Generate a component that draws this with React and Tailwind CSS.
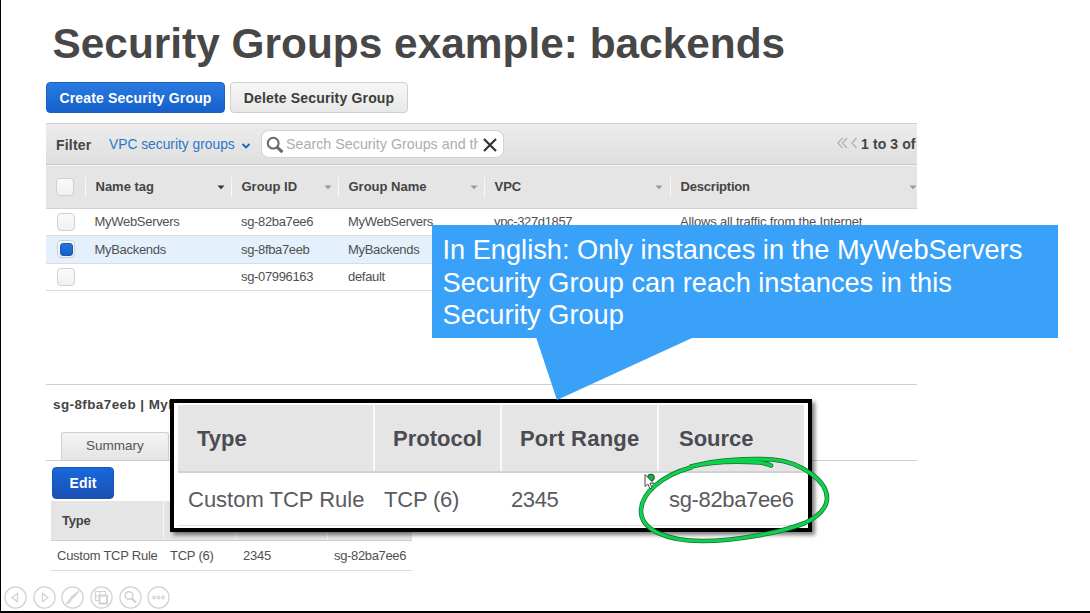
import React from "react";

const columns = [
  { label: "Name tag", width: "w-[146px]", arrow: "text-[#333]", gap: "pr-[6px]" },
  { label: "Group ID", width: "w-[107px]", arrow: "text-[#999]", gap: "pr-[6px]" },
  { label: "Group Name", width: "w-[146px]", arrow: "text-[#999]", gap: "pr-[6px]" },
  { label: "VPC", width: "w-[186px]", arrow: "text-[#999]", gap: "pr-[7px]", },
  { label: "Description", width: "w-[247px]", arrow: "text-[#999]", gap: "pr-0", tight: true },
];

const rows = [
  { name: "MyWebServers", id: "sg-82ba7ee6", group: "MyWebServers", vpc: "vpc-327d1857", desc: "Allows all traffic from the Internet" },
  { name: "MyBackends", id: "sg-8fba7eeb", group: "MyBackends", vpc: "", desc: "", selected: true },
  { name: "", id: "sg-07996163", group: "default", vpc: "", desc: "" },
];

function Checkbox({ checked }) {
  return (
    <span className="flex h-[18px] w-[18px] items-center justify-center rounded-[4px] border border-[#d0d0d0] bg-linear-to-b from-[#fbfbfb] to-[#f0f0f0]">
      {checked && <span className="h-[13px] w-[13px] rounded-[3px] border border-[#1a5cb5] bg-linear-to-b from-[#2277e0] to-[#1560cc]" />}
    </span>
  );
}

function SortArrow({ className }) {
  return (
    <svg className={className} width="8" height="5" viewBox="0 0 8 5">
      <path d="M0.5 0.5H7.5L4 4.3Z" fill="currentColor" />
    </svg>
  );
}

function Toolbar() {
  return (
    <div className="flex h-[42px] items-center border-t border-b border-t-[#cfcfcf] border-b-[#cacaca] bg-linear-to-b from-[#ececec] to-[#dfdfdf] pl-[10px] whitespace-nowrap">
      <span className="w-[53px] pt-[2px] text-[14px] font-bold tracking-[0.2px] text-[#444]">Filter</span>
      <span className="w-[132px] pt-[3px] text-[13.8px] text-[#2a78c8]">VPC security groups</span>
      <svg width="10" height="6" viewBox="0 0 10 6" className="mt-[3px]">
        <path d="M1.5 1L5 4.4L8.5 1" fill="none" stroke="#1a62c0" strokeWidth="1.8" />
      </svg>
      <div className="ml-[10px] flex h-[28px] w-[243px] items-center rounded-[8px] border border-[#d3d3d3] bg-white pl-[4px]">
        <svg width="18" height="18" viewBox="0 0 18 18" className="mt-px">
          <circle cx="7.2" cy="7.2" r="5.4" fill="none" stroke="#666" strokeWidth="2" />
          <path d="M11.3 11.3L16.4 16.2" stroke="#666" strokeWidth="3" />
        </svg>
        <span className="ml-[2px] w-[192px] overflow-hidden pt-[2px] text-[14.3px] text-[#adadad]">Search Security Groups and their</span>
        <svg width="14" height="14" viewBox="0 0 14 14" className="mt-px ml-[5px] shrink-0">
          <path d="M1 1L13 13M13 1L1 13" stroke="#333" strokeWidth="2.2" />
        </svg>
      </div>
      <svg width="21" height="12" viewBox="0 0 21 12" className="mb-[3px] ml-[333px]" fill="none" stroke="#b4b4b4" strokeWidth="1.4">
        <path d="M5.5 1L1 6L5.5 11M10 1L5.5 6L10 11M19.5 1L15 6L19.5 11" />
      </svg>
      <span className="ml-[3px] pt-px text-[14px] font-bold tracking-[0.1px] text-[#444]">1 to 3 of</span>
    </div>
  );
}

function GroupTable() {
  return (
    <div className="text-[13px] whitespace-nowrap">
      <div className="flex h-[44px] items-center border-t border-b border-t-[#f3f3f3] border-b-[#d2d2d2] bg-[#e5e5e5] font-bold text-[#444]">
        <div className="w-[39px] pl-[10px]"><Checkbox /></div>
        {columns.map((c) => (
          <div key={c.label} className={`flex h-[20px] items-center justify-between border-l border-l-[#f8f8f8] pl-[10px] ${c.width} ${c.gap}`}>
            <span className={c.tight ? "-ml-[0.5px] tracking-[-0.2px]" : "-ml-[0.5px]"}>{c.label}</span>
            <SortArrow className={c.arrow} />
          </div>
        ))}
      </div>
      {rows.map((r) => (
        <div key={r.id} className={`flex h-[27.3px] items-center border-b border-[#dcdcdc] tracking-[-0.3px] text-[#505050] ${r.selected ? "bg-[#e5f0fd]" : "bg-white"}`}>
          <div className="w-[48.5px] pl-[11px]"><Checkbox checked={r.selected} /></div>
          <div className="w-[146.5px]">{r.name}</div>
          <div className="w-[107px] tracking-[-0.35px]">{r.id}</div>
          <div className="w-[146px]">{r.group}</div>
          <div className="w-[186px] tracking-[-0.35px]">{r.vpc}</div>
          <div className="tracking-[-0.17px]">{r.desc}</div>
        </div>
      ))}
    </div>
  );
}

function RulesTable() {
  return (
    <div className="ml-[5px] w-[361px] text-[13px] whitespace-nowrap">
      <div className="flex h-[40px] items-center border-b border-[#cdcdcd] bg-[#e5e5e5] font-bold text-[#444]">
        <div className="flex h-full w-[113px] items-center border-r border-[#f6f6f6] pl-[11px] tracking-[-0.2px]">Type</div>
        <div className="h-full w-[73px] border-r border-[#f6f6f6]" />
        <div className="h-full w-[91px] border-r border-[#f6f6f6]" />
      </div>
      <div className="flex h-[30px] items-center border-b border-[#dcdcdc] tracking-[-0.25px] text-[#505050]">
        <div className="w-[113px] pl-[6px]">Custom TCP Rule</div>
        <div className="w-[73px] pl-[6px]">TCP (6)</div>
        <div className="w-[91px] pl-[6px]">2345</div>
        <div className="pl-[6px] tracking-[-0.35px]">sg-82ba7ee6</div>
      </div>
    </div>
  );
}

function MagnifiedRule() {
  return (
    <div className="absolute top-[399px] left-[170px] h-[133px] w-[642px] border-4 border-black bg-white px-[4px] pt-[2px] whitespace-nowrap shadow-[3px_3px_4px_rgba(0,0,0,0.5)]">
      <div className="flex h-[68px] border-b-2 border-[#d2d2d2] bg-[#e5e5e5] text-[22px] font-bold text-[#4b4b52]">
        <div className="flex w-[197px] items-center border-r-2 border-[#f8f8f8] pl-[19px]">Type</div>
        <div className="flex w-[127px] items-center border-r-2 border-[#f8f8f8] pl-[18px]">Protocol</div>
        <div className="flex w-[157px] items-center border-r-2 border-[#f8f8f8] pl-[18px] tracking-[0.2px]">Port Range</div>
        <div className="flex flex-1 items-center pl-[20px]">Source</div>
      </div>
      <div className="flex h-[53px] items-center border-b border-[#e2e2e2] text-[22px] text-[#5a5a62]">
        <div className="w-[197px] pl-[10px]">Custom TCP Rule</div>
        <div className="w-[127px] pl-[9px] tracking-[-0.2px]">TCP (6)</div>
        <div className="w-[157px] pl-[9px] tracking-[-0.4px]">2345</div>
        <div className="pl-[10px] tracking-[-0.35px]">sg-82ba7ee6</div>
      </div>
    </div>
  );
}

function Callout() {
  return (
    <div className="absolute top-[225px] left-[432px] w-[626px]">
      <div className="h-[113px] bg-[#3aa1f8] pt-[9px] pl-[10.5px] text-[27.2px] leading-[32.5px] whitespace-nowrap text-white">
        <div>In English: Only instances in the MyWebServers</div>
        <div>Security Group can reach instances in this</div>
        <div>Security Group</div>
      </div>
      <svg width="626" height="62" viewBox="0 0 626 62" className="block">
        <path d="M104 -1L125 62L260 0V-1Z" fill="#3aa1f8" />
      </svg>
    </div>
  );
}

function Ink() {
  const loop =
    "M691 466.5C715 460.5 745 461.5 760 462.5Q767 463.5 771 465.5M691 466.5C715 460 748 458 772 459.5C803 462 827 482 827 498C827 511 813 519 805 523C780 533 735 541 702 541C667 541 641 530 641 511C641 493 663 475 691 467.5";
  return (
    <svg className="pointer-events-none absolute top-0 left-0" width="1090" height="613" viewBox="0 0 1090 613">
      <g fill="none" strokeLinecap="round" strokeLinejoin="round">
        <path d={loop} stroke="#23643a" strokeWidth="4.6" />
        <path d={loop} stroke="#0bd34c" strokeWidth="3.2" />
      </g>
      <circle cx="651" cy="477.5" r="3.4" fill="#12b53f" stroke="#1d4a2b" strokeWidth="1" />
      <path d="M645 474.5V486.5L647.8 484L650 488.7L652 487.8L650 483.2H653.6Z" fill="white" stroke="#333" strokeWidth="0.9" />
    </svg>
  );
}

function NavButton({ children }) {
  return (
    <svg width="23" height="23" viewBox="0 0 23 23" fill="none" stroke="#d2d2d2" strokeWidth="1.2">
      <circle cx="11.5" cy="11.5" r="10.6" />
      {children}
    </svg>
  );
}

function SlideControls() {
  return (
    <div className="absolute top-[585.5px] left-[4px] flex gap-[5.7px]">
      <NavButton><path d="M13.5 7.2V15.8L8 11.5Z" /></NavButton>
      <NavButton><path d="M9.5 7.2V15.8L15 11.5Z" /></NavButton>
      <NavButton><path d="M18 5L10.5 11L8.5 14L11.5 12.5L18 5ZM8.5 14L5.5 17.5L9 16.5L10 13.6" /></NavButton>
      <NavButton>
        <path d="M9 14.5H5.5V5.5H15.5V8M5.5 10H9M10 5.5V8" />
        <path d="M9.5 9.5H17V17.5H9.5Z" strokeWidth="2" />
      </NavButton>
      <NavButton>
        <circle cx="10" cy="9.5" r="3.8" strokeWidth="1.6" />
        <path d="M12.8 12.3L17 16.8" strokeWidth="2.4" />
      </NavButton>
      <NavButton>
        <circle cx="7" cy="11.5" r="1.3" />
        <circle cx="11.5" cy="11.5" r="1.3" />
        <circle cx="16" cy="11.5" r="1.3" />
      </NavButton>
    </div>
  );
}

export default function App() {
  return (
    <div className="relative h-[613px] w-[1090px] overflow-hidden border-b-2 border-l border-black bg-white font-['Liberation_Sans',Arial,sans-serif]">
      <div className="-ml-px flex flex-col pl-[46px]">
        <h1 className="h-[82px] pt-[20px] pl-[6.5px] text-[42.4px] leading-[48px] font-bold whitespace-nowrap text-[#474747]">
          Security Groups example: backends
        </h1>
        <div className="flex h-[41px] items-start gap-[5px]">
          <button className="h-[31px] w-[179px] rounded-[4px] border border-[#1a5fc0] bg-linear-to-b from-[#2a7be2] to-[#1560c9] pt-px text-[14px] font-bold tracking-[0.17px] whitespace-nowrap text-white">
            Create Security Group
          </button>
          <button className="h-[31px] w-[178px] rounded-[4px] border border-[#cfcfcf] bg-linear-to-b from-[#f6f6f6] to-[#e8e8e8] pt-px text-[14px] font-bold tracking-[0.17px] whitespace-nowrap text-[#3c3c3c]">
            Delete Security Group
          </button>
        </div>
        <div className="h-[262px] w-[871px] overflow-hidden border-b border-[#cfcfcf]">
          <Toolbar />
          <GroupTable />
        </div>
        <div className="w-[871px]">
          <div className="pt-[10px] pl-[7px] text-[13.4px] leading-[20px] font-bold tracking-[0.45px] whitespace-nowrap text-[#444]">
            sg-8fba7eeb | MyBackends
          </div>
          <div className="mt-[17px] flex h-[29px] border-b border-[#cfcfcf] pl-[15px]">
            <div className="flex h-[28px] w-[108px] items-center justify-center rounded-t-[3px] border border-b-0 border-[#d0d0d0] bg-linear-to-b from-[#f5f5f5] to-[#e4e4e4] text-[13.5px] text-[#555]">
              Summary
            </div>
          </div>
          <button className="mt-[6px] ml-[6px] block h-[32px] w-[62px] rounded-[4px] border border-[#1a55b5] bg-linear-to-b from-[#1769dc] to-[#1a4fb4] pt-px text-[14px] font-bold tracking-[0.2px] text-white">
            Edit
          </button>
          <div className="h-[2px]" />
          <RulesTable />
        </div>
      </div>
      <div className="absolute top-0 -left-px h-[613px] w-[1090px]">
        <MagnifiedRule />
        <Callout />
        <SlideControls />
        <Ink />
      </div>
    </div>
  );
}
